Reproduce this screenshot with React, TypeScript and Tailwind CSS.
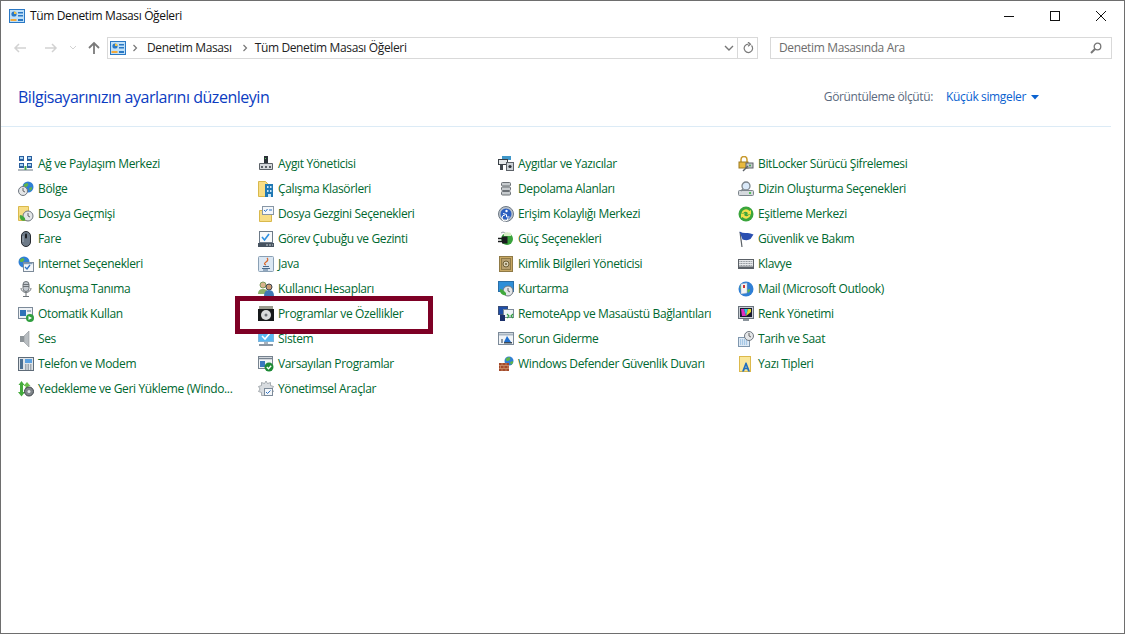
import type { ReactNode } from 'react'

const FONT = "font-['Open_Sans','Noto_Sans',sans-serif]"

function Ico({ children }: { children: ReactNode }) {
  return (
    <svg width="16" height="16" viewBox="0 0 16 16" className="shrink-0">
      {children}
    </svg>
  )
}

function Globe({ cx = 10, cy = 6, r = 5 }: { cx?: number; cy?: number; r?: number }) {
  return (
    <>
      <circle cx={cx} cy={cy} r={r} fill="#2f7fd6" />
      <path d={`M${cx - r + 1} ${cy - 2}q2 -2 4 -2l1 2l-2 2l-2 0z M${cx + 1} ${cy + 1}l3 -1l0 2l-2 2z`} fill="#5fb548" />
    </>
  )
}

function Clock({ cx = 10, cy = 10, r = 5 }: { cx?: number; cy?: number; r?: number }) {
  return (
    <>
      <circle cx={cx} cy={cy} r={r} fill="#e4e6e8" stroke="#6f7780" />
      <path d={`M${cx} ${cy - 3}V${cy}l2 1`} fill="none" stroke="#444" strokeWidth="0.8" />
    </>
  )
}

const ICONS: Record<string, ReactNode> = {
  network: (
    <>
      <rect x="1" y="0" width="5" height="5" fill="#2a5f9e" />
      <rect x="9" y="0" width="5" height="5" fill="#2a5f9e" />
      <rect x="1" y="7" width="5" height="5" fill="#2a5f9e" />
      <rect x="9" y="7" width="5" height="5" fill="#2a5f9e" />
      <rect x="2" y="1" width="3" height="2" fill="#a9d3f2" />
      <rect x="10" y="1" width="3" height="2" fill="#a9d3f2" />
      <rect x="2" y="8" width="3" height="2" fill="#a9d3f2" />
      <rect x="10" y="8" width="3" height="2" fill="#a9d3f2" />
      <path d="M0 14h15" stroke="#9aa3ab" strokeWidth="1.5" />
      <path d="M7.5 10v4" stroke="#3fa34d" strokeWidth="2" />
    </>
  ),
  region: (
    <>
      <Globe cx={10} cy={6} r={5.5} />
      <Clock cx={5} cy={10} r={4.5} />
    </>
  ),
  history: (
    <>
      <path d="M0.5 0.5h10v14h-10z" fill="#f7dd85" stroke="#d9b94c" />
      <Clock cx={10} cy={10} r={5} />
      <path d="M2 9a4 4 0 0 0 5 5.500l0 -2.500l-3 -2.500z" fill="#41a83c" />
    </>
  ),
  mouse: (
    <>
      <rect x="3.5" y="0.5" width="9" height="15" rx="4.5" fill="#6d7a88" stroke="#262a30" />
      <rect x="7" y="2.5" width="2" height="5" rx="1" fill="#1b1e22" />
      <path d="M5 5v6" stroke="#a5afb9" />
    </>
  ),
  internet: (
    <>
      <Globe cx={6} cy={6} r={5.5} />
      <rect x="5.5" y="6.5" width="10" height="9" fill="#f4f7fa" stroke="#7c8a99" />
      <path d="M5.5 7.5h9" stroke="#7c9ab8" strokeWidth="1.5" />
      <path d="M7 11l2 2l3 -4" fill="none" stroke="#2e72c4" strokeWidth="1.3" />
    </>
  ),
  speech: (
    <>
      <rect x="5" y="0.5" width="6" height="10" rx="3" fill="#c4c9cf" stroke="#6c7277" />
      <path d="M3 7a5 4.500 0 0 0 10 0M8 12v3M5 15.500h6M5 3.500h6M5 5.500h6" fill="none" stroke="#6c7277" />
    </>
  ),
  autoplay: (
    <>
      <rect x="0.5" y="1.5" width="14" height="11" fill="#eef2f6" stroke="#7c8a99" />
      <rect x="2" y="4" width="6" height="6" fill="#2e72b8" />
      <rect x="9" y="4" width="4" height="2" fill="#9fb2c4" />
      <circle cx="12" cy="12" r="4" fill="#2f9e3f" />
      <path d="M10.5 10l3.500 2l-3.500 2z" fill="#fff" />
    </>
  ),
  sound: (
    <>
      <rect x="2" y="5" width="4" height="6" fill="#8d9499" />
      <path d="M6 5l5 -5v16l-5 -5z" fill="#b9bec2" stroke="#8d9499" strokeWidth="0.6" />
    </>
  ),
  phone: (
    <>
      <rect x="0.5" y="1.5" width="15" height="13" fill="#dfe4e9" stroke="#5e6b78" />
      <rect x="2" y="3" width="3" height="10" fill="#4c6f91" />
      <rect x="7" y="3" width="7" height="4" fill="#5ba0e0" />
      <path d="M7 9h7M7 11h7M7 13h7" stroke="#5e6b78" strokeDasharray="1.5 1" />
    </>
  ),
  backup: (
    <>
      <path d="M3.500 0l3 4h-1.500v7h2l-3.500 4.500l-3.500 -4.500h2v-7h-1.500z" fill="#44ab3c" />
      <path d="M9 1l3.500 4h-2v3h-3v-3h-2z" fill="#6abf4b" />
      <circle cx="11" cy="10.500" r="4.500" fill="#7f858a" stroke="#3f454a" />
      <circle cx="11" cy="10.500" r="1.500" fill="#e2e5e8" />
    </>
  ),
  device: (
    <>
      <rect x="6" y="0" width="4" height="7" fill="#2c3238" />
      <rect x="7" y="2" width="1" height="1" fill="#55d15a" />
      <path d="M1.500 7.500h13v6h-13z" fill="#d5d8db" stroke="#5c6268" />
      <rect x="3" y="10" width="2" height="2" fill="#5c6268" />
      <rect x="7" y="10" width="2" height="2" fill="#5c6268" />
      <rect x="11" y="10" width="2" height="2" fill="#5c6268" />
    </>
  ),
  work: (
    <>
      <path d="M0.5 0.5h7l2 2v13h-9z" fill="#f7dd85" stroke="#d9b94c" />
      <rect x="7" y="3" width="8" height="13" fill="#1f78b4" />
      <path d="M9 5h1.500v2H9zM12 5h1.500v2H12zM9 9h1.500v2H9zM12 9h1.500v2H12zM10 13h3v3h-3z" fill="#cbe6f7" />
    </>
  ),
  explorer: (
    <>
      <path d="M1.500 4.500h12v11h-12z" fill="#f7dd85" stroke="#d9b94c" />
      <rect x="4.500" y="0.5" width="11" height="8" fill="#f4f7fa" stroke="#8796a5" />
      <path d="M6 4l1.500 1.500l2 -2.500M11 4h3" fill="none" stroke="#2e72c4" />
    </>
  ),
  taskbar: (
    <>
      <rect x="1.500" y="0.5" width="13" height="11" fill="#f7f9fb" stroke="#6d7a88" />
      <path d="M4 6l2.500 3l4.500 -6" fill="none" stroke="#2e8fe0" strokeWidth="1.6" />
      <rect x="0" y="12" width="16" height="4" fill="#46525f" />
      <path d="M8 14h2M11 14h2M14 14h1" stroke="#c8d0d8" />
    </>
  ),
  java: (
    <>
      <rect x="0.5" y="0.5" width="15" height="15" rx="1" fill="#dbe7f3" stroke="#8aa0b5" />
      <path d="M9 2q2 2 -1 4t0 3" fill="none" stroke="#d9662a" strokeWidth="1.2" />
      <path d="M5 10.500h6M4 12.500h8M5 14h5" stroke="#4a6a8c" />
    </>
  ),
  users: (
    <>
      <circle cx="5" cy="4" r="3" fill="#d9b38c" stroke="#7a9a5a" />
      <path d="M0 13q0 -5 5 -5t5 5z" fill="#8db36a" />
      <circle cx="11" cy="6" r="3" fill="#c99a72" stroke="#3a4450" />
      <path d="M6 15q0 -6 5 -6t5 6z" fill="#3f78b5" />
    </>
  ),
  programs: (
    <>
      <rect x="1" y="0" width="14" height="4" fill="#9a9c8e" />
      <rect x="0" y="3" width="16" height="12" fill="#17191b" />
      <circle cx="8" cy="9" r="5" fill="#d8dadc" />
      <circle cx="8" cy="9" r="1.500" fill="#6d7278" />
    </>
  ),
  system: (
    <>
      <rect x="0.5" y="0.5" width="15" height="10" fill="#59b7f0" stroke="#7cb4dc" />
      <path d="M4 5l3 3l5 -6" fill="none" stroke="#fff" strokeWidth="1.6" />
      <rect x="6" y="11" width="4" height="2" fill="#a9b3bd" />
      <rect x="1" y="13" width="14" height="2" fill="#8a96a3" />
    </>
  ),
  defaults: (
    <>
      <rect x="0.5" y="0.5" width="14" height="12" fill="#f1f4f7" stroke="#77838f" />
      <path d="M1 2.500h13" stroke="#77838f" strokeWidth="1.5" />
      <rect x="2" y="5" width="5" height="6" fill="#3877bf" />
      <circle cx="11" cy="11" r="4.500" fill="#1d8a36" />
      <path d="M8.800 11l1.700 1.700l2.700 -3" fill="none" stroke="#fff" strokeWidth="1.3" />
    </>
  ),
  admin: (
    <>
      <path d="M8 0l1.500 2.500l3 -1l0 3l3 1l-1.500 2.500l1.500 2.500l-3 1l0 3h-9l0 -3l-3 -1l1.500 -2.500l-1.500 -2.500l3 -1l0 -3l3 1z" fill="#d8dce0" stroke="#8b9298" strokeWidth="0.7" />
      <rect x="6.500" y="7.500" width="8" height="7" fill="#f4f7fa" stroke="#7c8a99" />
      <path d="M8 11l1.500 1.500l3 -3" fill="none" stroke="#2e72c4" />
    </>
  ),
  printers: (
    <>
      <rect x="4" y="0" width="9" height="4" fill="#3f97c9" />
      <rect x="0.5" y="3.500" width="9" height="5" fill="#e5e8ea" stroke="#3a4046" />
      <rect x="2" y="8" width="3" height="6" fill="#41474d" />
      <rect x="8.500" y="6.500" width="7" height="8" fill="#ccd1d5" stroke="#5c6268" />
      <circle cx="12" cy="10.500" r="1.600" fill="#2c3238" />
    </>
  ),
  storage: (
    <>
      <rect x="3.500" y="1.500" width="9" height="3.500" rx="1" fill="#c7cbce" stroke="#6b7075" />
      <rect x="3.500" y="6" width="9" height="3.500" rx="1" fill="#c7cbce" stroke="#6b7075" />
      <rect x="3.500" y="10.500" width="9" height="3.500" rx="1" fill="#c7cbce" stroke="#6b7075" />
    </>
  ),
  access: (
    <>
      <circle cx="8" cy="8" r="7.500" fill="#bcc4cc" stroke="#6c7884" />
      <circle cx="8" cy="8" r="5.500" fill="#2c5fc0" />
      <circle cx="8.500" cy="5" r="1.200" fill="#fff" />
      <path d="M5 7.500l3.500 1l0 2.500l3 0M7 9a3 3 0 1 0 3 3" fill="none" stroke="#fff" />
    </>
  ),
  power: (
    <>
      <path d="M3 2q2 -2 4 0t3 0" fill="none" stroke="#9aa2a8" />
      <circle cx="9" cy="8" r="6" fill="#39a33c" />
      <path d="M4 5.500h5.500v7h-5.500z" fill="#1a1c1e" />
      <path d="M0 7.500h4.500M0 10.500h4.500" stroke="#1a1c1e" strokeWidth="1.3" />
      <path d="M6 2q3 -1.500 7 0l0 3h-7z" fill="#d8efc8" />
    </>
  ),
  credential: (
    <>
      <rect x="1.500" y="0.5" width="13" height="15" fill="#c8a864" stroke="#8f7a46" />
      <rect x="3.500" y="2.500" width="9" height="11" fill="#b8a070" stroke="#8f7a46" />
      <circle cx="8" cy="8" r="3" fill="#d9d0b4" stroke="#6e5e34" />
      <circle cx="8" cy="8" r="1" fill="#6e5e34" />
    </>
  ),
  recovery: (
    <>
      <rect x="0.5" y="0.5" width="15" height="10" fill="#2f8fd8" stroke="#2a6fa8" />
      <Clock cx={10} cy={10} r={5} />
      <path d="M2 8a5 5 0 0 0 6 6l0 -2l-3 -3z" fill="#41a83c" />
    </>
  ),
  remote: (
    <>
      <rect x="0.5" y="0.5" width="9" height="8" fill="#1e4fa8" stroke="#3a4e78" />
      <rect x="5.500" y="3.500" width="10" height="8" fill="#eef2f6" stroke="#7c8a99" />
      <rect x="2" y="9" width="5" height="6" fill="#1a2f6a" />
      <path d="M9 8l2 2l-2 2M15 8l-2 2l2 2" fill="none" stroke="#2f9e3f" strokeWidth="1.2" />
    </>
  ),
  trouble: (
    <>
      <rect x="0.5" y="1.500" width="15" height="12" fill="#f1f4f7" stroke="#7c8a99" />
      <path d="M1 3.500h14" stroke="#a9b6c2" strokeWidth="2" />
      <path d="M6 11l3 -6l4 6z" fill="#1f6fd0" />
      <rect x="3" y="8" width="2" height="4" fill="#8c98a4" />
      <rect x="6" y="11" width="8" height="1.500" fill="#3a4a5a" />
    </>
  ),
  firewall: (
    <>
      <Globe cx={11} cy={5} r={4.5} />
      <path d="M1 7h10v8H1z" fill="#a34a2c" />
      <path d="M1 9.500h10M1 12.500h10M4 7v2.500M8 7v2.500M2.500 9.500v3M6 9.500v3M10 9.500v3M4 12.500v2.500M8 12.500v2.500" stroke="#d9a27c" strokeWidth="0.6" />
    </>
  ),
  bitlocker: (
    <>
      <path d="M3 6V3.500a3 3 0 0 1 6 0V6" fill="none" stroke="#c89a2e" strokeWidth="1.5" />
      <rect x="1" y="6" width="9" height="6" fill="#e8b93e" stroke="#9c7a20" />
      <rect x="8" y="7" width="7" height="5" fill="#c7cbce" stroke="#5c6268" />
      <path d="M10 10l-5 5" stroke="#5c6268" strokeWidth="1.5" />
      <circle cx="12" cy="9.500" r="1" fill="#3fa34d" />
    </>
  ),
  indexing: (
    <>
      <rect x="0.5" y="9.500" width="15" height="5" rx="1" fill="#d5d9dd" stroke="#7d858c" />
      <rect x="11" y="11" width="2" height="2" fill="#55c15a" />
      <circle cx="8" cy="5" r="4" fill="#dbeafa" stroke="#7d858c" strokeWidth="1.3" />
      <path d="M5 8l-2 2" stroke="#7d858c" strokeWidth="1.5" />
    </>
  ),
  sync: (
    <>
      <circle cx="8" cy="8" r="7.500" fill="#3aa53c" />
      <path d="M3.500 7a4.500 4.500 0 0 1 8 -2l1.500 -1v4.500h-4.500l1.500 -1.200a2.700 2.700 0 0 0 -4.700 -.3zM12.500 9a4.500 4.500 0 0 1 -8 2l-1.500 1v-4.500h4.500l-1.500 1.200a2.700 2.700 0 0 0 4.700 .3z" fill="#f2e04a" />
    </>
  ),
  flag: (
    <>
      <path d="M2 1l2 15" stroke="#5c6268" strokeWidth="1.2" />
      <path d="M1.500 0.500q4 2 7 1.500t7 1.500q-2 3 -3 4.500q-3 2 -8 .5z" fill="#2a4fb0" />
    </>
  ),
  keyboard: (
    <>
      <rect x="0" y="3" width="16" height="10" fill="#5a6066" />
      <rect x="1" y="4" width="14" height="6.500" fill="#e6e8ea" />
      <path d="M1.500 5.500h13M1.500 7.500h13M1.500 9.500h13" stroke="#8a9096" strokeDasharray="1 .6" />
    </>
  ),
  mail: (
    <>
      <Globe cx={8} cy={8} r={7.5} />
      <path d="M3 3l6 -1v10l-6 1z" fill="#f3f5f7" stroke="#a8b0b8" strokeWidth="0.5" />
      <rect x="5" y="4" width="2" height="3" fill="#c33" />
    </>
  ),
  color: (
    <>
      <rect x="0.5" y="0.5" width="15" height="12" fill="#c9cfd5" stroke="#6a737c" />
      <rect x="2" y="2" width="12" height="9" fill="#1a1a30" />
      <path d="M3 3h3l2 7H4z" fill="#e02fbe" />
      <path d="M6 3h4l-2 7z" fill="#2cc6e0" />
      <path d="M10 3h3v3l-5 4z" fill="#e6d82c" />
      <rect x="5" y="13" width="6" height="2" fill="#8a939b" />
    </>
  ),
  datetime: (
    <>
      <rect x="0.5" y="6.500" width="11" height="9" fill="#dfeaf5" stroke="#7f97ae" />
      <path d="M2 9h8M2 11h8M2 13h8" stroke="#6ea7d8" strokeDasharray="1.2 .8" />
      <Clock cx={11} cy={5} r={4.5} />
    </>
  ),
  fonts: (
    <>
      <rect x="1.500" y="0.5" width="11" height="15" fill="#f9e79a" stroke="#dcb94c" />
      <path d="M4 15.500l3.500 -9h1l3.500 9h-2l-.8 -2.200h-2.400l-.8 2.200zM7.300 11.800h1.400l-.7 -2z" fill="#1f6fc0" />
    </>
  ),
}

function ControlPanelIcon() {
  return (
    <svg width="16" height="14" viewBox="0 0 16 14" className="shrink-0">
      <rect x="0.5" y="0.5" width="15" height="13" fill="#bfe0f8" stroke="#2a78c4" />
      <circle cx="5" cy="5" r="2.600" fill="#2a78c4" />
      <path d="M5 2.400A2.600 2.600 0 0 1 7.600 5H5z" fill="#f5c542" />
      <rect x="9" y="3" width="5" height="1.500" fill="#2a78c4" />
      <rect x="9" y="6" width="5" height="1.500" fill="#2a78c4" />
      <rect x="1.500" y="10" width="6" height="2" fill="#f2a93b" />
      <rect x="9" y="10" width="5" height="2" fill="#2a78c4" />
    </svg>
  )
}

type Item = { label: string; icon: string }

const COLUMNS: Item[][] = [
  [
    { label: 'Ağ ve Paylaşım Merkezi', icon: 'network' },
    { label: 'Bölge', icon: 'region' },
    { label: 'Dosya Geçmişi', icon: 'history' },
    { label: 'Fare', icon: 'mouse' },
    { label: 'Internet Seçenekleri', icon: 'internet' },
    { label: 'Konuşma Tanıma', icon: 'speech' },
    { label: 'Otomatik Kullan', icon: 'autoplay' },
    { label: 'Ses', icon: 'sound' },
    { label: 'Telefon ve Modem', icon: 'phone' },
    { label: 'Yedekleme ve Geri Yükleme (Windo...', icon: 'backup' },
  ],
  [
    { label: 'Aygıt Yöneticisi', icon: 'device' },
    { label: 'Çalışma Klasörleri', icon: 'work' },
    { label: 'Dosya Gezgini Seçenekleri', icon: 'explorer' },
    { label: 'Görev Çubuğu ve Gezinti', icon: 'taskbar' },
    { label: 'Java', icon: 'java' },
    { label: 'Kullanıcı Hesapları', icon: 'users' },
    { label: 'Programlar ve Özellikler', icon: 'programs' },
    { label: 'Sistem', icon: 'system' },
    { label: 'Varsayılan Programlar', icon: 'defaults' },
    { label: 'Yönetimsel Araçlar', icon: 'admin' },
  ],
  [
    { label: 'Aygıtlar ve Yazıcılar', icon: 'printers' },
    { label: 'Depolama Alanları', icon: 'storage' },
    { label: 'Erişim Kolaylığı Merkezi', icon: 'access' },
    { label: 'Güç Seçenekleri', icon: 'power' },
    { label: 'Kimlik Bilgileri Yöneticisi', icon: 'credential' },
    { label: 'Kurtarma', icon: 'recovery' },
    { label: 'RemoteApp ve Masaüstü Bağlantıları', icon: 'remote' },
    { label: 'Sorun Giderme', icon: 'trouble' },
    { label: 'Windows Defender Güvenlik Duvarı', icon: 'firewall' },
  ],
  [
    { label: 'BitLocker Sürücü Şifrelemesi', icon: 'bitlocker' },
    { label: 'Dizin Oluşturma Seçenekleri', icon: 'indexing' },
    { label: 'Eşitleme Merkezi', icon: 'sync' },
    { label: 'Güvenlik ve Bakım', icon: 'flag' },
    { label: 'Klavye', icon: 'keyboard' },
    { label: 'Mail (Microsoft Outlook)', icon: 'mail' },
    { label: 'Renk Yönetimi', icon: 'color' },
    { label: 'Tarih ve Saat', icon: 'datetime' },
    { label: 'Yazı Tipleri', icon: 'fonts' },
  ],
]

function Crumb() {
  return (
    <svg width="6" height="8" viewBox="0 0 6 8" className="shrink-0">
      <path d="M1.500 1l3 3l-3 3" fill="none" stroke="#777" strokeWidth="1.2" />
    </svg>
  )
}

export default function App() {
  return (
    <div className={`relative w-[1125px] h-[634px] overflow-hidden bg-white border border-[#6e6e6e] text-[12px] ${FONT}`}>
      {/* Title bar */}
      <div className="flex items-center h-[30px]">
        <div className="ml-2 mr-[5px]"><ControlPanelIcon /></div>
        <span className="text-[12px] tracking-[-0.36px] text-[#111]">Tüm Denetim Masası Öğeleri</span>
        <div className="ml-auto flex items-center">
          <div className="w-[46px] flex justify-center">
            <svg width="10" height="10" viewBox="0 0 10 10"><path d="M0 5.500h10" stroke="#111" /></svg>
          </div>
          <div className="w-[46px] flex justify-center">
            <svg width="10" height="10" viewBox="0 0 10 10"><rect x="0.5" y="0.5" width="9" height="9" fill="none" stroke="#111" /></svg>
          </div>
          <div className="w-[46px] flex justify-center">
            <svg width="10" height="10" viewBox="0 0 10 10"><path d="M0 0l10 10M10 0L0 10" stroke="#111" /></svg>
          </div>
        </div>
      </div>

      {/* Address row */}
      <div className="flex items-center h-[22px] mt-[6px]">
        <div className="flex items-center w-[106px] shrink-0">
          <svg width="14" height="12" viewBox="0 0 14 12" className="ml-[12px]">
            <path d="M13 6H2M6 2L2 6l4 4" fill="none" stroke="#d2d2d2" strokeWidth="1.5" />
          </svg>
          <svg width="14" height="12" viewBox="0 0 14 12" className="ml-[17px]">
            <path d="M1 6h11M8 2l4 4l-4 4" fill="none" stroke="#d2d2d2" strokeWidth="1.5" />
          </svg>
          <svg width="8" height="6" viewBox="0 0 8 6" className="ml-[11px]">
            <path d="M1 1l3 3l3 -3" fill="none" stroke="#d2d2d2" />
          </svg>
          <svg width="14" height="14" viewBox="0 0 14 14" className="ml-[10px]">
            <path d="M7 13V2M2 7l5 -5l5 5" fill="none" stroke="#7a7a7a" strokeWidth="1.8" />
          </svg>
        </div>
        <div className="flex items-center w-[651px] h-full border border-[#d9d9d9] text-[#222]">
          <div className="ml-[2px]"><ControlPanelIcon /></div>
          <div className="ml-[6px]"><Crumb /></div>
          <span className="ml-[9px] tracking-[-0.36px]">Denetim Masası</span>
          <div className="ml-[10px]"><Crumb /></div>
          <span className="ml-[7px] tracking-[-0.36px]">Tüm Denetim Masası Öğeleri</span>
          <div className="ml-auto flex items-center h-full">
            <svg width="10" height="7" viewBox="0 0 10 7" className="mr-[3px]">
              <path d="M1 1l4 4l4 -4" fill="none" stroke="#777" strokeWidth="1.4" />
            </svg>
            <div className="flex items-center justify-center w-[20px] h-full border-l border-[#d9d9d9]">
              <svg width="12" height="12" viewBox="0 0 12 12">
                <path d="M9.500 3.500a4.200 4.200 0 1 1 -3 -1.400M6 0l2.500 2.200L6 4.200" fill="none" stroke="#7a7a7a" strokeWidth="1.2" />
              </svg>
            </div>
          </div>
        </div>
        <div className="flex items-center w-[342px] h-full ml-[12px] px-2 border border-[#d9d9d9] text-[#6d6d6d]">
          <span className="tracking-[-0.36px]">Denetim Masasında Ara</span>
          <svg width="12" height="12" viewBox="0 0 12 12" className="ml-auto mr-[1px]">
            <circle cx="7.500" cy="4.500" r="3.300" fill="none" stroke="#777" strokeWidth="1.3" />
            <path d="M5 7l-4 4" stroke="#777" strokeWidth="2" />
          </svg>
        </div>
      </div>

      {/* Heading */}
      <div className="flex items-center h-[67px] pt-[9px] pl-[17px] pr-[85px]">
        <h1 className="text-[16px] tracking-[-0.47px] text-[#0b3cc1]">Bilgisayarınızın ayarlarını düzenleyin</h1>
        <span className="ml-auto text-[#5b6a7e] tracking-[-0.36px]">Görüntüleme ölçütü:</span>
        <span className="ml-[13px] text-[#0a62d0] tracking-[-0.36px]">Küçük simgeler</span>
        <svg width="8" height="5" viewBox="0 0 8 5" className="ml-[5px]">
          <path d="M0 0h8L4 4.500z" fill="#0a62d0" />
        </svg>
      </div>
      <div className="h-px mr-[13px] bg-[#dcebf6]" />

      {/* Items */}
      <div className="flex pl-[17px] pt-[24px]">
        {COLUMNS.map((col, i) => (
          <div key={i} className="w-[240px]">
            {col.map(item => (
              <div key={item.label} className="flex items-center h-[25px] gap-1 text-[#00682f]">
                <Ico>{ICONS[item.icon]}</Ico>
                <span className="tracking-[-0.36px] whitespace-nowrap">{item.label}</span>
              </div>
            ))}
          </div>
        ))}
      </div>

      {/* Highlight marker over "Programlar ve Özellikler" */}
      <div className="absolute left-[234px] top-[295px] w-[198px] h-[38px] border-[5px] border-[#7e0025]" />
    </div>
  )
}
